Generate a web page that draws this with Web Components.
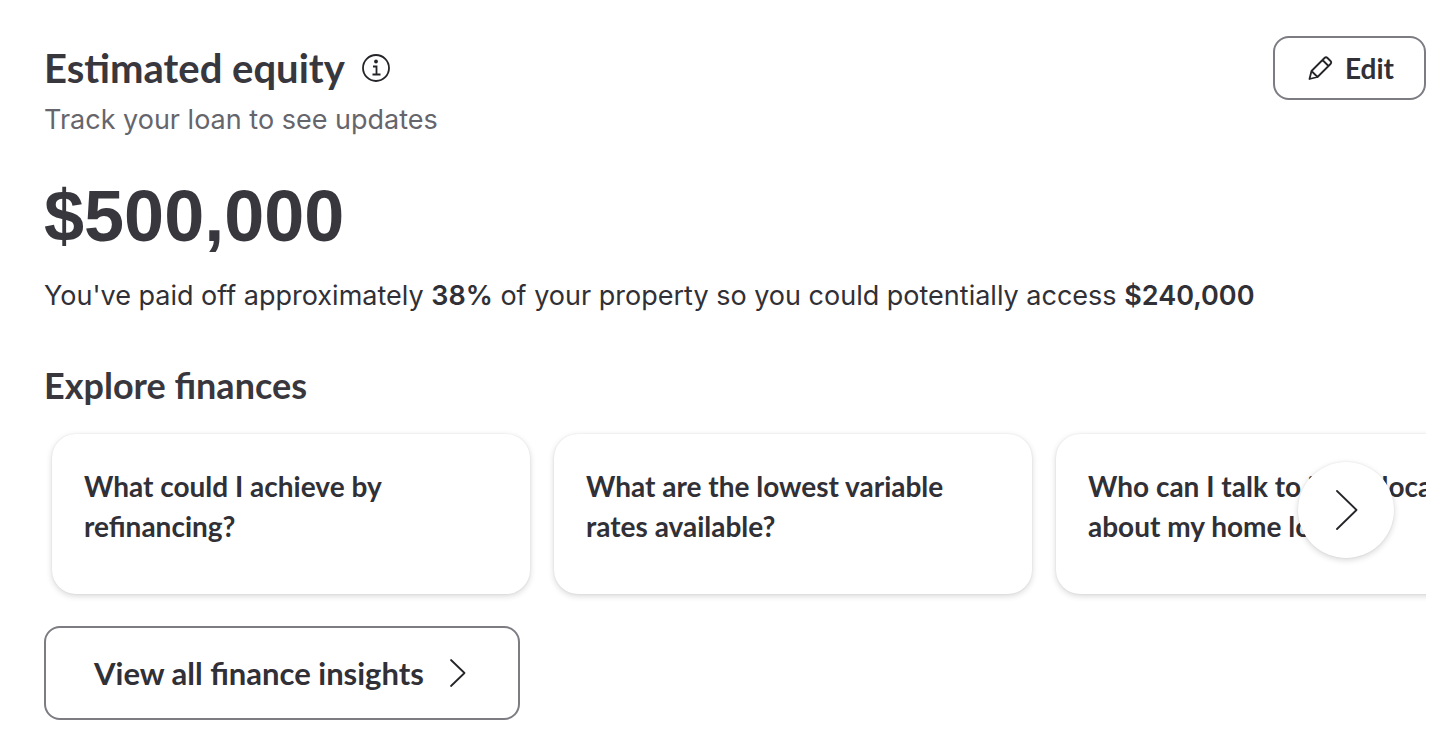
<!DOCTYPE html>
<html lang="en">
<head>
  <meta charset="utf-8">
  <meta name="viewport" content="width=device-width, initial-scale=1">
  <title>Estimated equity</title>
  <style>
    :root {
      --ink: #38373d;
      --text: #313036;
      --muted: #66656c;
      --outline: #7d7c83;
      --heading-font: Lato, "Open Sans", sans-serif;
      --body-font: Inter, "Noto Sans", sans-serif;
      --figure-font: "Liberation Sans", Arial, sans-serif;
    }

    body {
      margin: 0;
      background: #fff;
      color: var(--text);
      font-family: var(--body-font);
    }
  </style>
</head>
<body>
  <equity-page></equity-page>

  <script>
    class OutlineButton extends HTMLElement {
      constructor () {
        super()
        this.shadow = this.attachShadow({ mode: 'open' })
      }

      connectedCallback () {
        this.render()
      }

      render () {
        this.shadow.innerHTML =
          /* html */`
          <style>
            :host {
              display: block;
            }

            button {
              box-sizing: border-box;
              width: 100%;
              display: flex;
              align-items: center;
              gap: 12px;
              margin: 0;
              padding: 10px 30px 10px 32px;
              border: 2px solid var(--outline);
              border-radius: 16px;
              background: #fff;
              color: var(--text);
              font: 700 28px/40px var(--heading-font);
              cursor: pointer;
            }

            :host([large]) button {
              gap: 24px;
              padding: 25px 48px;
              font-size: 31px;
            }
          </style>
          <button type="button">
            <slot name="before"></slot>
            <slot></slot>
            <slot name="after"></slot>
          </button>
          `
      }
    }

    customElements.define('outline-button', OutlineButton)

    class InsightCard extends HTMLElement {
      constructor () {
        super()
        this.shadow = this.attachShadow({ mode: 'open' })
      }

      connectedCallback () {
        this.render()
      }

      render () {
        this.shadow.innerHTML =
          /* html */`
          <style>
            :host {
              display: block;
              flex: 0 0 478px;
            }

            a {
              box-sizing: border-box;
              display: block;
              min-height: 160px;
              padding: 32px;
              border-radius: 24px;
              background: #fff;
              box-shadow: 0 2px 6px rgba(0, 0, 0, 0.16), 0 0 2px rgba(0, 0, 0, 0.08);
              color: var(--text);
              font: 700 28px/40px var(--heading-font);
              text-decoration: none;
            }
          </style>
          <a href="#"><slot></slot></a>
          `
      }
    }

    customElements.define('insight-card', InsightCard)

    class InsightCarousel extends HTMLElement {
      constructor () {
        super()
        this.shadow = this.attachShadow({ mode: 'open' })
      }

      connectedCallback () {
        this.render()
      }

      render () {
        this.shadow.innerHTML =
          /* html */`
          <style>
            :host {
              display: block;
              position: relative;
            }

            .track {
              display: flex;
              gap: 24px;
              padding: 8px;
              overflow: hidden;
            }

            /* floats over the last visible card */
            .next {
              position: absolute;
              right: 32px;
              bottom: 44px;
              display: flex;
              align-items: center;
              justify-content: center;
              width: 96px;
              height: 96px;
              padding: 0;
              border: none;
              border-radius: 50%;
              background: #fff;
              box-shadow: 0 2px 6px rgba(0, 0, 0, 0.16), 0 0 2px rgba(0, 0, 0, 0.08);
              cursor: pointer;
            }

            svg {
              display: block;
            }
          </style>
          <div class="track"><slot></slot></div>
          <button class="next" type="button" aria-label="Next">
            <svg width="48" height="48" viewBox="0 0 48 48" fill="none" stroke="#252429" stroke-width="1.8" stroke-linecap="round" stroke-linejoin="round">
              <path d="M15 5l19.500 19-19.500 19"/>
            </svg>
          </button>
          `
      }
    }

    customElements.define('insight-carousel', InsightCarousel)

    class EquityPage extends HTMLElement {
      constructor () {
        super()
        this.shadow = this.attachShadow({ mode: 'open' })
      }

      connectedCallback () {
        this.render()
      }

      render () {
        this.shadow.innerHTML =
          /* html */`
          <style>
            :host {
              display: block;
              padding: 36px 30px 20px 44px;
            }

            h1, h2, p {
              margin: 0;
            }

            header {
              display: flex;
              align-items: flex-start;
              justify-content: space-between;
            }

            .title {
              display: flex;
              align-items: center;
              gap: 16px;
              height: 64px;
            }

            h1 {
              color: var(--ink);
              font: 700 40px/48px var(--heading-font);
            }

            .info {
              display: flex;
              padding: 0;
              border: none;
              background: none;
              cursor: pointer;
            }

            svg {
              display: block;
              flex: none;
            }

            .subtitle {
              color: var(--muted);
              font-size: 27px;
              line-height: 40px;
            }

            .amount {
              margin-top: 32px;
              color: var(--ink);
              font: 700 72px/88px var(--figure-font);
            }

            .summary {
              margin-top: 16px;
              font-size: 27px;
              line-height: 40px;
            }

            .summary strong {
              font-weight: 600;
            }

            h2 {
              margin-top: 45px;
              color: var(--ink);
              font: 700 36px/48px var(--heading-font);
            }

            insight-carousel {
              margin-top: 17px;
            }

            .all {
              width: fit-content;
              margin-top: 24px;
            }
          </style>
          <header>
            <div>
              <div class="title">
                <h1>Estimated equity</h1>
                <button class="info" type="button" aria-label="About estimated equity">
                  <svg width="30" height="30" viewBox="0 0 30 30" fill="none" stroke="#252429" stroke-width="1.8">
                    <circle cx="15" cy="15" r="13"/>
                    <path d="M12 13.500h3.500v8M11.500 21.500h8"/>
                    <circle cx="15" cy="8.500" r="1.900" fill="#252429" stroke="none"/>
                  </svg>
                </button>
              </div>
              <p class="subtitle">Track your loan to see updates</p>
            </div>
            <outline-button>
              <svg slot="before" width="26" height="26" viewBox="0 0 26 26" fill="none" stroke="#252429" stroke-width="1.800" stroke-linejoin="round" stroke-linecap="round">
                <path d="M2.500 24l2-8L17.500 3q1.500-1.500 3 0l3 3q1.500 1.500 0 3L10.500 22zM4.500 16l6 6M15.500 5l6 6"/>
              </svg>
              Edit
            </outline-button>
          </header>
          <p class="amount">$500,000</p>
          <p class="summary">You've paid off approximately <strong>38%</strong> of your property so you could potentially access <strong>$240,000</strong></p>
          <h2>Explore finances</h2>
          <insight-carousel>
            <insight-card>What could I achieve by refinancing?</insight-card>
            <insight-card>What are the lowest variable rates available?</insight-card>
            <insight-card>Who can I talk to in my local area about my home loan?</insight-card>
          </insight-carousel>
          <outline-button class="all" large>
            View all finance insights
            <svg slot="after" width="22" height="32" viewBox="0 0 22 32" fill="none" stroke="#252429" stroke-width="1.800" stroke-linecap="round" stroke-linejoin="round">
              <path d="M3 3l13.500 13L3 29"/>
            </svg>
          </outline-button>
          `
      }
    }

    customElements.define('equity-page', EquityPage)
  </script>
</body>
</html>
